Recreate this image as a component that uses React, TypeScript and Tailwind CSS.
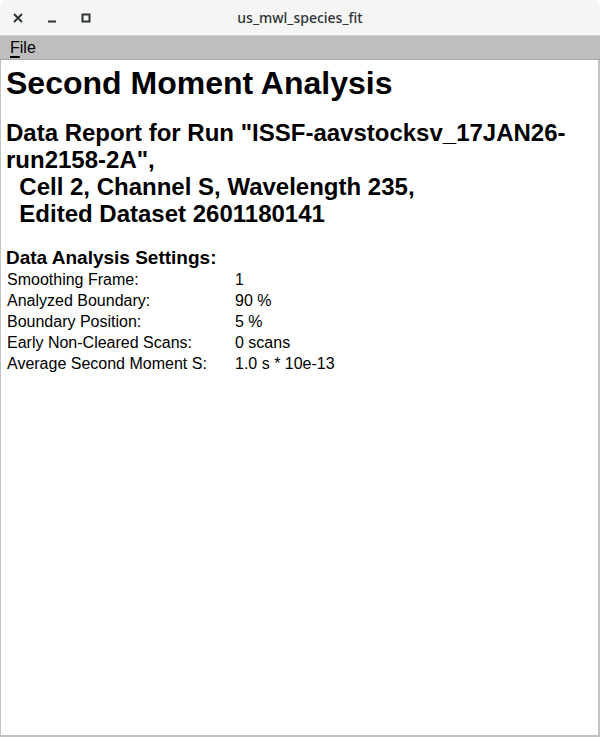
export default function App() {
  const rows: [string, string][] = [
    ['Smoothing Frame:', '1'],
    ['Analyzed Boundary:', '90 %'],
    ['Boundary Position:', '5 %'],
    ['Early Non-Cleared Scans:', '0 scans'],
    ['Average Second Moment S:', '1.0 s * 10e-13'],
  ]

  return (
    <div className="w-[600px] h-[737px] flex flex-col bg-white overflow-hidden" style={{ fontFamily: '"Liberation Sans", Arial, sans-serif' }}>
      {/* title bar */}
      <div className="h-[36px] shrink-0 bg-[#f5f5f5] border-b border-[#d6d6d6] rounded-t-[8px] flex items-center relative">
        <div className="flex items-center">
          <span className="w-[36px] flex justify-center text-[#2e3436]">
            <svg width="10" height="10" viewBox="0 0 10 10"><path d="M1 1 L9 9 M9 1 L1 9" stroke="#2e3436" strokeWidth="2" /></svg>
          </span>
          <span className="w-[32px] flex justify-center">
            <svg width="10" height="10" viewBox="0 0 10 10"><path d="M1 8.5 H9" stroke="#2e3436" strokeWidth="2" /></svg>
          </span>
          <span className="w-[36px] flex justify-center">
            <svg width="10" height="10" viewBox="0 0 10 10"><rect x="1.5" y="1.5" width="7" height="7" fill="none" stroke="#2e3436" strokeWidth="2" /></svg>
          </span>
        </div>
        <div className="absolute inset-0 flex items-center justify-center pointer-events-none text-[14px] font-medium text-[#2e3436]" style={{ fontFamily: '"Noto Sans", "DejaVu Sans", sans-serif' }}>
          us_mwl_species_fit
        </div>
      </div>

      {/* menu bar */}
      <div className="h-[24px] shrink-0 bg-[#bebebe] border-b border-[#a8a8a8] flex items-center px-[10px] text-[16px] text-black">
        <span><span className="underline decoration-2 underline-offset-[3px]">F</span>ile</span>
      </div>

      {/* content */}
      <div className="flex-1 bg-white border-l border-r-2 border-b-2 border-[#c2c2c2] px-[5px] pt-[5px] text-black">
        <h1 className="text-[32px] font-bold leading-[36px]">Second Moment Analysis</h1>
        <h2 className="text-[24px] font-bold leading-[27px] mt-[18px]">
          Data Report for Run "ISSF-aavstocksv_17JAN26-<br />
          run2158-2A",<br />
          &nbsp;&nbsp;Cell 2, Channel S, Wavelength 235,<br />
          &nbsp;&nbsp;Edited Dataset 2601180141
        </h2>
        <h3 className="text-[19px] font-bold leading-[22px] mt-[20px]">Data Analysis Settings:</h3>
        <table className="text-[16px] leading-[21px] ml-[1px]">
          <tbody>
            {rows.map(([k, v]) => (
              <tr key={k}>
                <td className="w-[228px] p-0">{k}</td>
                <td className="p-0">{v}</td>
              </tr>
            ))}
          </tbody>
        </table>
      </div>
    </div>
  )
}
